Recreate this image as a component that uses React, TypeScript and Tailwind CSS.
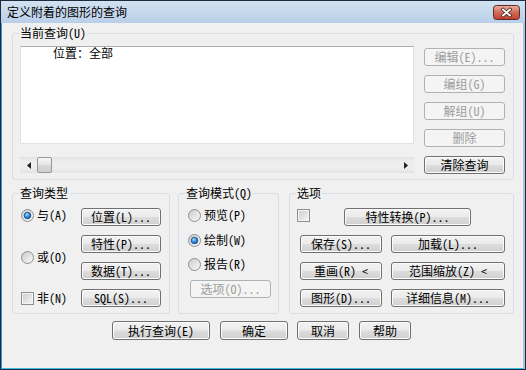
import type { ReactNode } from "react";

const Btn = ({
  children,
  className = "",
  disabled = false,
}: {
  children: ReactNode;
  className?: string;
  disabled?: boolean;
}) => (
  <button
    type="button"
    className={`flex h-[18px] shrink-0 items-center justify-center rounded-[3px] border text-[12px] leading-none ${
      disabled
        ? "border-[#adb2b5] bg-[#f4f4f4] text-[#9c9c9c]"
        : "border-[#707070] bg-[linear-gradient(#f2f2f2,#ebebeb_48%,#dddddd_52%,#cfcfcf)] text-black shadow-[inset_0_0_0_1px_#fcfcfc]"
    } ${className}`}
  >
    {children}
  </button>
);

const Radio = ({ label, checked = false, className = "" }: { label: string; checked?: boolean; className?: string }) => (
  <div className={`flex h-[18px] items-center ${className}`}>
    <svg width="13" height="13" viewBox="0 0 13 13">
      <defs>
        <linearGradient id="rg" x1="0" y1="0" x2="1" y2="1">
          <stop offset="0" stopColor="#c9cacb" />
          <stop offset="1" stopColor="#fbfbfb" />
        </linearGradient>
        <radialGradient id="rd" cx="0.4" cy="0.35" r="0.7">
          <stop offset="0" stopColor="#a8dcff" />
          <stop offset="0.5" stopColor="#3c8fe0" />
          <stop offset="1" stopColor="#0d4ea6" />
        </radialGradient>
      </defs>
      <circle cx="6.5" cy="6.5" r="6" fill="url(#rg)" stroke="#8e8f8f" />
      {checked && <circle cx="6.5" cy="6.5" r="3.3" fill="url(#rd)" stroke="#1b4a85" strokeWidth="0.8" />}
    </svg>
    <span className="ml-[3px] text-[12px] leading-[12px]">{label}</span>
  </div>
);

const Check = ({ className = "" }: { className?: string }) => (
  <div
    className={`h-[13px] w-[13px] shrink-0 border border-[#8e8f8f] bg-[linear-gradient(135deg,#c9ccd1,#f6f6f6)] shadow-[inset_0_0_0_1px_#f4f4f4] ${className}`}
  />
);

const Group = ({ title, className = "", children }: { title: string; className?: string; children: ReactNode }) => (
  <fieldset className={`shrink-0 rounded-[3px] border border-[#d5dfe5] ${className}`}>
    <legend className="ml-[6px] px-[1px] text-[12px] leading-[12px]">{title}</legend>
    {children}
  </fieldset>
);

export default function App() {
  return (
    <div className="h-[370px] w-[526px] bg-[#1e2d3d] p-[1px] font-['Noto_Sans_Mono_CJK_SC','Noto_Sans_CJK_SC',sans-serif] text-black">
      <div className="flex h-full flex-col bg-[#bfd3ea]">
        {/* title bar */}
        <div className="flex h-[22px] shrink-0 items-start justify-between bg-[linear-gradient(#d3e2f2,#b9cfe8)] pl-[6px] pr-[5px]">
          <span className="mt-[5px] text-[12px] leading-[12px]">定义附着的图形的查询</span>
          <svg className="mt-[4px]" width="27" height="15" viewBox="0 0 27 15">
            <defs>
              <linearGradient id="cb" x1="0" y1="0" x2="0" y2="1">
                <stop offset="0" stopColor="#eab3a6" />
                <stop offset="0.5" stopColor="#d26a58" />
                <stop offset="1" stopColor="#c0402f" />
              </linearGradient>
            </defs>
            <rect x="0.5" y="0.5" width="26" height="14" rx="3" fill="url(#cb)" stroke="#5d2a24" />
            <path d="M10 4.5 L17 10.5 M17 4.5 L10 10.5" stroke="#4a1e18" strokeWidth="3.6" strokeLinecap="round" />
            <path d="M10 4.5 L17 10.5 M17 4.5 L10 10.5" stroke="#ffffff" strokeWidth="2" strokeLinecap="round" />
          </svg>
        </div>

        {/* client area */}
        <div className="flex-1 border-b border-l border-r-2 border-b-[#3cbde6] border-l-[#3c8fd2] border-r-[#a9c3df] bg-[#f0f0f0]">
          <Group title="当前查询(U)" className="ml-[10px] mt-[4px] h-[153px] w-[502px]">
            <div className="flex pl-[7px] pt-[7px]">
              <div className="w-[394px]">
                <div className="h-[98px] border border-[#e2e3ea] border-t-[#abadb3] bg-white pl-[32px] text-[12px] leading-[12px]">
                  位置：全部
                </div>
                <div className="mt-[13px] flex h-[16px] bg-[linear-gradient(#e3e3e3,#eeeeee_30%,#eeeeee_70%,#e3e3e3)]">
                  <div className="flex w-[17px] items-center justify-center">
                    <svg width="4" height="7" viewBox="0 0 4 7">
                      <polygon points="4,0 4,7 0,3.5" fill="#222" />
                    </svg>
                  </div>
                  <div className="h-[16px] w-[15px] rounded-[2px] border border-[#979797] bg-[linear-gradient(#f6f6f6,#e6e6e6_50%,#d8d8d8_50%,#d0d0d0)]" />
                  <div className="flex-1" />
                  <div className="flex w-[17px] items-center justify-center">
                    <svg width="4" height="7" viewBox="0 0 4 7">
                      <polygon points="0,0 0,7 4,3.5" fill="#222" />
                    </svg>
                  </div>
                </div>
              </div>
              <div className="ml-[10px] flex w-[81px] flex-col gap-[9px] pt-[2px]">
                <Btn disabled className="w-[81px]">编辑(E)...</Btn>
                <Btn disabled className="w-[81px]">编组(G)</Btn>
                <Btn disabled className="w-[81px]">解组(U)</Btn>
                <Btn disabled className="w-[81px]">删除</Btn>
                <Btn className="w-[81px]">清除查询</Btn>
              </div>
            </div>
          </Group>

          <div className="ml-[10px] mt-[7px] flex">
            <Group title="查询类型" className="h-[127px] w-[158px]">
              <div className="flex">
                <div className="flex w-[68px] flex-col pl-[8px]">
                  <Radio label="与(A)" checked className="mt-[7px]" />
                  <Radio label="或(O)" className="mt-[24px]" />
                  <div className="mt-[23px] flex h-[18px] items-center">
                    <Check />
                    <span className="ml-[3px] text-[12px] leading-[12px]">非(N)</span>
                  </div>
                </div>
                <div className="flex flex-col gap-[9px] pt-[9px]">
                  <Btn className="w-[80px]">位置(L)...</Btn>
                  <Btn className="w-[80px]">特性(P)...</Btn>
                  <Btn className="w-[80px]">数据(T)...</Btn>
                  <Btn className="w-[80px]">SQL(S)...</Btn>
                </div>
              </div>
            </Group>

            <Group title="查询模式(Q)" className="ml-[8px] h-[127px] w-[101px]">
              <div className="flex flex-col pl-[9px]">
                <Radio label="预览(P)" className="mt-[7px]" />
                <Radio label="绘制(W)" checked className="mt-[7px]" />
                <Radio label="报告(R)" className="mt-[6px]" />
                <Btn disabled className="ml-[2px] mt-[7px] w-[81px]">选项(O)...</Btn>
              </div>
            </Group>

            <Group title="选项" className="ml-[10px] h-[127px] w-[225px]">
              <div className="flex flex-col">
                <div className="mt-[9px] flex items-start pl-[7px]">
                  <Check className="mt-[1px]" />
                  <Btn className="ml-[34px] w-[127px]">特性转换(P)...</Btn>
                </div>
                <div className="mt-[9px] flex pl-[10px]">
                  <Btn className="w-[82px]">保存(S)...</Btn>
                  <Btn className="ml-[9px] w-[114px]">加载(L)...</Btn>
                </div>
                <div className="mt-[9px] flex pl-[10px]">
                  <Btn className="w-[82px]">重画(R) &lt;</Btn>
                  <Btn className="ml-[9px] w-[114px]">范围缩放(Z) &lt;</Btn>
                </div>
                <div className="mt-[9px] flex pl-[10px]">
                  <Btn className="w-[82px]">图形(D)...</Btn>
                  <Btn className="ml-[9px] w-[114px]">详细信息(M)...</Btn>
                </div>
              </div>
            </Group>
          </div>

          <div className="mt-[7px] flex pl-[110px]">
            <Btn className="h-[19px] w-[98px]">执行查询(E)</Btn>
            <Btn className="ml-[10px] h-[19px] w-[68px]">确定</Btn>
            <Btn className="ml-[9px] h-[19px] w-[52px]">取消</Btn>
            <Btn className="ml-[10px] h-[19px] w-[52px]">帮助</Btn>
          </div>
        </div>
      </div>
    </div>
  );
}
